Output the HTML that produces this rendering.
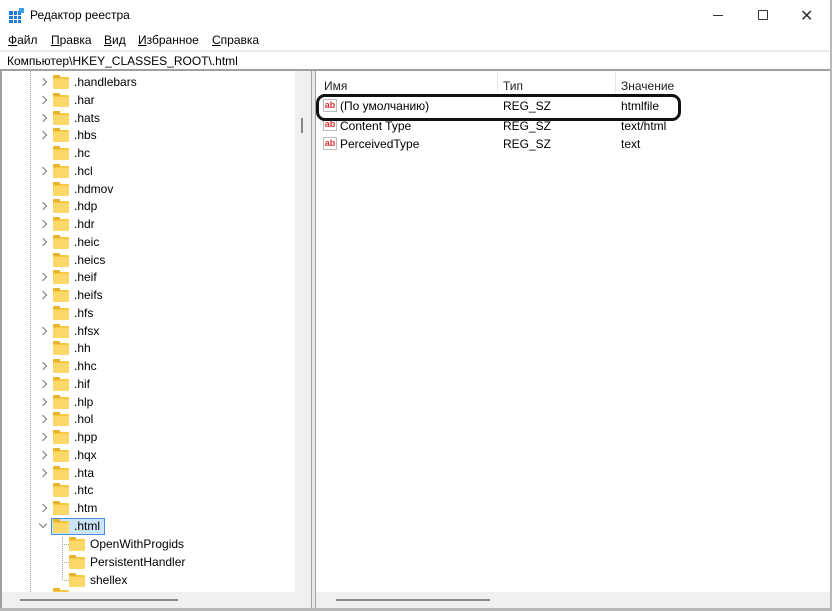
<!DOCTYPE html>
<html><head><meta charset="utf-8"><style>
*{margin:0;padding:0;box-sizing:border-box}
body{width:832px;height:611px;background:#fff;font-family:"Segoe UI","Liberation Sans","Noto Sans CJK SC",sans-serif;font-size:12px;color:#000;position:relative;overflow:hidden}
.abs{position:absolute}
.menu span{position:absolute;top:33px;font-size:12px}
.row{position:absolute;height:18px;line-height:18px;font-size:12px;white-space:nowrap}
.chev{position:absolute;width:6px;height:6px;border-right:1.3px solid #777;border-bottom:1.3px solid #777;transform:rotate(-45deg)}
.fold{position:absolute;width:16px;height:12px;background:#f8c93f;border-radius:1px}
.fold:before{content:"";position:absolute;left:0;top:-2px;width:7px;height:3px;background:#e8b42c;border-radius:1px 1px 0 0}
.fold:after{content:"";position:absolute;left:0;top:2px;width:16px;height:10px;background:#fcd86a;border-radius:1px}
.ab{position:absolute;width:14px;height:13px;border:1px solid #bbb;background:#fff;font-size:9px;font-weight:bold;color:#d33;line-height:10px;text-align:center}
</style></head><body>
<div class="abs" style="left:9px;top:8px;width:15px;height:15px">
<div class="abs" style="left:0;top:3px;width:12px;height:12px;background:
linear-gradient(#fff,#fff) 4px 0/1px 12px no-repeat,linear-gradient(#fff,#fff) 8px 0/1px 12px no-repeat,linear-gradient(#fff,#fff) 0 4px/12px 1px no-repeat,linear-gradient(#fff,#fff) 0 8px/12px 1px no-repeat,#1b7ad6"></div>
<div class="abs" style="left:10px;top:0;width:5px;height:5px;background:#3aa0f0"></div></div>
<div class="abs" style="left:30px;top:8px;font-size:12px">Редактор реестра</div>
<div class="abs" style="left:713px;top:15px;width:10px;height:1px;background:#333"></div>
<div class="abs" style="left:758px;top:10px;width:10px;height:10px;border:1px solid #333;border-radius:1px"></div>
<div class="abs" style="left:800px;top:6px;font-size:16px;color:#333">✕</div>
<div class="menu">
<span style="left:8px"><u>Ф</u>айл</span><span style="left:51px"><u>П</u>равка</span><span style="left:104px"><u>В</u>ид</span><span style="left:138px"><u>И</u>збранное</span><span style="left:212px"><u>С</u>правка</span></div>
<div class="abs" style="left:0;top:50px;width:832px;height:2px;background:#ececec"></div>
<div class="abs" style="left:7px;top:54px;font-size:12px">Компьютер\HKEY_CLASSES_ROOT\.html</div>
<div class="abs" style="left:0;top:69px;width:832px;height:2px;background:#a0a0a0"></div>
<div class="abs" style="left:0;top:71px;width:2px;height:540px;background:#a0a0a0"></div>
<div class="abs" style="left:2px;top:71px;width:293px;height:521px;background:#fff;overflow:hidden">
<div class="abs" style="left:28px;top:0;width:0;height:521px;border-left:1px dotted #aaa"></div>
<div id="tree" class="abs" style="left:-2px;top:-71px;width:297px;height:592px;overflow:hidden"></div>
</div>
<div class="abs" style="left:295px;top:71px;width:16px;height:521px;background:#f0f0f0"></div>
<div class="abs" style="left:301px;top:118px;width:2px;height:15px;background:#888"></div>
<div class="abs" style="left:2px;top:592px;width:309px;height:16px;background:#f0f0f0"></div>
<div class="abs" style="left:20px;top:599px;width:158px;height:2px;background:#888"></div>
<div class="abs" style="left:311px;top:71px;width:5px;height:540px;background:#e8e8e8;border-left:1px solid #a0a0a0;border-right:1px solid #a0a0a0"></div>
<div class="abs" style="left:316px;top:71px;width:514px;height:521px;background:#fff"></div>
<div class="abs" style="left:316px;top:592px;width:514px;height:16px;background:#f0f0f0"></div>
<div class="abs" style="left:336px;top:599px;width:154px;height:2px;background:#888"></div>
<div class="abs" style="left:830px;top:0;width:2px;height:611px;background:#b8b8b8"></div>
<div class="abs" style="left:0;top:608px;width:832px;height:3px;background:#b8b8b8"></div>
<div class="abs" style="left:497px;top:72px;width:1px;height:20px;background:#e5e5e5"></div>
<div class="abs" style="left:615px;top:72px;width:1px;height:20px;background:#e5e5e5"></div>
<div class="row" style="left:324px;top:77px;color:#222">Имя</div>
<div class="row" style="left:503px;top:77px;color:#222">Тип</div>
<div class="row" style="left:621px;top:77px;color:#222">Значение</div>
<div class="ab" style="left:323px;top:99px">ab</div>
<div class="row" style="left:340px;top:97px">(По умолчанию)</div><div class="row" style="left:503px;top:97px">REG_SZ</div><div class="row" style="left:621px;top:97px">htmlfile</div>
<div class="ab" style="left:323px;top:118px">ab</div>
<div class="row" style="left:340px;top:117px">Content Type</div><div class="row" style="left:503px;top:117px">REG_SZ</div><div class="row" style="left:621px;top:117px">text/html</div>
<div class="ab" style="left:323px;top:137px">ab</div>
<div class="row" style="left:340px;top:135px">PerceivedType</div><div class="row" style="left:503px;top:135px">REG_SZ</div><div class="row" style="left:621px;top:135px">text</div>
<div class="abs" style="left:316px;top:94px;width:365px;height:27px;border:3px solid #111;border-radius:9px"></div>
<script>
var n=[".handlebars",".har",".hats",".hbs",".hc",".hcl",".hdmov",".hdp",".hdr",".heic",".heics",".heif",".heifs",".hfs",".hfsx",".hh",".hhc",".hif",".hlp",".hol",".hpp",".hqx",".hta",".htc",".htm",".html"];
var nc={".hc":1,".hdmov":1,".heics":1,".hfs":1,".hh":1,".htc":1};
var h="";
n.forEach(function(t,i){var y=73+i*17.75;
if(t==".html"){h+='<div class="chev" style="left:40px;top:'+(y+4)+'px;transform:rotate(45deg)"></div>';
h+='<div class="abs" style="left:51px;top:'+(y+1)+'px;width:54px;height:17px;border:1px solid #4a90d9;background:#cce4f7"></div>';}
else if(!nc[t])h+='<div class="chev" style="left:40px;top:'+(y+6)+'px"></div>';
h+='<div class="fold" style="left:53px;top:'+(y+4)+'px"></div><div class="row" style="left:74px;top:'+y+'px">'+t+'</div>';});
["OpenWithProgids","PersistentHandler","shellex"].forEach(function(t,i){var y=535+i*17.75;
h+='<div class="abs" style="left:62px;top:'+(y+9)+'px;width:7px;border-top:1px dotted #aaa"></div>';
h+='<div class="fold" style="left:69px;top:'+(y+4)+'px"></div><div class="row" style="left:90px;top:'+y+'px">'+t+'</div>';});
h+='<div class="abs" style="left:62px;top:537px;height:44px;border-left:1px dotted #aaa"></div>';
h+='<div class="fold" style="left:53px;top:590px;height:2px"></div>';
document.getElementById("tree").innerHTML=h;
</script>
</body></html>
